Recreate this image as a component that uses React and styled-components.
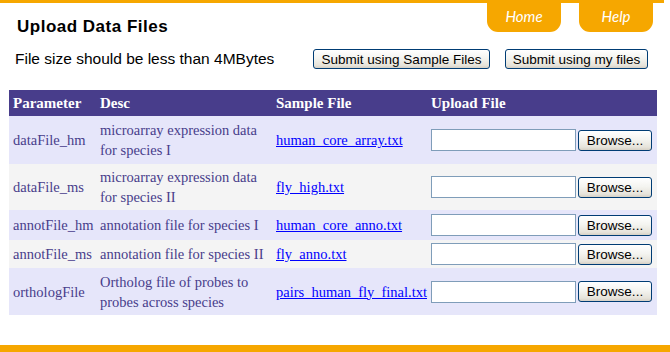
import React from 'react'
import styled, { createGlobalStyle } from 'styled-components'

const ORANGE = '#f6a700'
const SLATE = '#483d8b'

const files = [
    { param: 'dataFile_hm', desc: 'microarray expression data for species I', sample: 'human_core_array.txt', h: 48 },
    { param: 'dataFile_ms', desc: 'microarray expression data for species II', sample: 'fly_high.txt', h: 46 },
    { param: 'annotFile_hm', desc: 'annotation file for species I', sample: 'human_core_anno.txt', h: 30 },
    { param: 'annotFile_ms', desc: 'annotation file for species II', sample: 'fly_anno.txt', h: 28 },
    { param: 'orthologFile', desc: 'Ortholog file of probes to probes across species', sample: 'pairs_human_fly_final.txt', h: 47 },
]

function App() {
    return (
        <Page>
            <Global />
            <Masthead>
                <Title>Upload Data Files</Title>
                <Tabs>
                    <Tab href="/#">Home</Tab>
                    <Tab href="/#">Help</Tab>
                </Tabs>
            </Masthead>
            <Toolbar>
                <Note>File size should be less than 4MBytes</Note>
                <Actions>
                    <XpButton $w={177}>Submit using Sample Files</XpButton>
                    <XpButton $w={143}>Submit using my files</XpButton>
                </Actions>
            </Toolbar>
            <FileTable>
                <colgroup>
                    <col style={{ width: 87 }} />
                    <col style={{ width: 176 }} />
                    <col style={{ width: 155 }} />
                    <col style={{ width: 230 }} />
                </colgroup>
                <thead>
                    <tr>
                        <HeadCell>Parameter</HeadCell>
                        <HeadCell>Desc</HeadCell>
                        <HeadCell>Sample File</HeadCell>
                        <HeadCell>Upload File</HeadCell>
                    </tr>
                </thead>
                <tbody>
                    {files.map((f, i) => (
                        <Row key={f.param} $alt={i % 2 === 1} style={{ height: f.h }}>
                            <Cell>{f.param}</Cell>
                            <Cell>{f.desc}</Cell>
                            <Cell><SampleLink href="/#">{f.sample}</SampleLink></Cell>
                            <Cell>
                                <Picker>
                                    <PathBox type="text" />
                                    <BrowseButton>Browse...</BrowseButton>
                                </Picker>
                            </Cell>
                        </Row>
                    ))}
                </tbody>
            </FileTable>
            <BottomBar />
        </Page>
    )
}

const Global = createGlobalStyle`
body {
    margin: 0;
    background: #fff;
    font-family: "Liberation Sans", Arial, sans-serif;
}
`

const Page = styled.div`
width: 670px;
height: 352px;
display: flex;
flex-direction: column;
overflow: hidden;
`

const Masthead = styled.div`
width: 664px;
box-sizing: border-box;
border-top: 3px solid ${ORANGE};
display: flex;
justify-content: space-between;
align-items: flex-start;
padding: 0 11px 0 17px;
`

const Title = styled.h1`
margin: 14px 0 0;
font-size: 17px;
line-height: 20px;
letter-spacing: 0.5px;
font-weight: bold;
color: #000;
`

const Tabs = styled.nav`
display: flex;
gap: 18px;
`

const Tab = styled.a`
width: 74px;
height: 29px;
background: ${ORANGE};
border-radius: 0 0 11px 11px;
color: #fff;
font-family: Lato, "Open Sans", sans-serif;
font-style: italic;
font-size: 15px;
line-height: 27px;
text-align: center;
text-decoration: none;
`

const Toolbar = styled.div`
margin-top: 12px;
height: 20px;
display: flex;
align-items: center;
justify-content: space-between;
padding: 0 22px 0 15px;
`

const Note = styled.span`
font-size: 15.5px;
color: #000;
`

const Actions = styled.div`
display: flex;
gap: 15px;
`

const XpButton = styled.button`
width: ${p => p.$w}px;
height: 20px;
padding: 0;
border: 1px solid #003c74;
border-radius: 3px;
background: linear-gradient(#ffffff 0%, #f4f4f0 45%, #e6e3da 85%, #d6d0c5 100%);
font-family: "Liberation Sans", Arial, sans-serif;
font-size: 13.5px;
color: #000;
`

const FileTable = styled.table`
margin: 21px 0 0 9px;
width: 648px;
border-collapse: collapse;
table-layout: fixed;
font-family: "Liberation Serif", "Times New Roman", serif;
`

const HeadCell = styled.th`
height: 26px;
padding: 0 4px;
background: ${SLATE};
color: #fff;
font-size: 15px;
font-weight: bold;
text-align: left;
`

const Row = styled.tr`
background: ${p => (p.$alt ? '#f4f4f4' : '#e6e6fa')};
`

const Cell = styled.td`
padding: 0 4px;
vertical-align: middle;
color: ${SLATE};
font-size: 14.5px;
line-height: 20px;
`

const SampleLink = styled.a`
color: #0000ff;
text-decoration: underline;
`

const Picker = styled.div`
display: flex;
align-items: center;
gap: 2px;
`

const PathBox = styled.input`
width: 145px;
height: 22px;
box-sizing: border-box;
margin: 0;
border: 1px solid #7f9db9;
background: #fff;
`

const BrowseButton = styled(XpButton)`
width: 74px;
height: 21px;
font-size: 13.5px;
`

const BottomBar = styled.div`
margin-top: auto;
height: 7px;
background: ${ORANGE};
`

export default App
